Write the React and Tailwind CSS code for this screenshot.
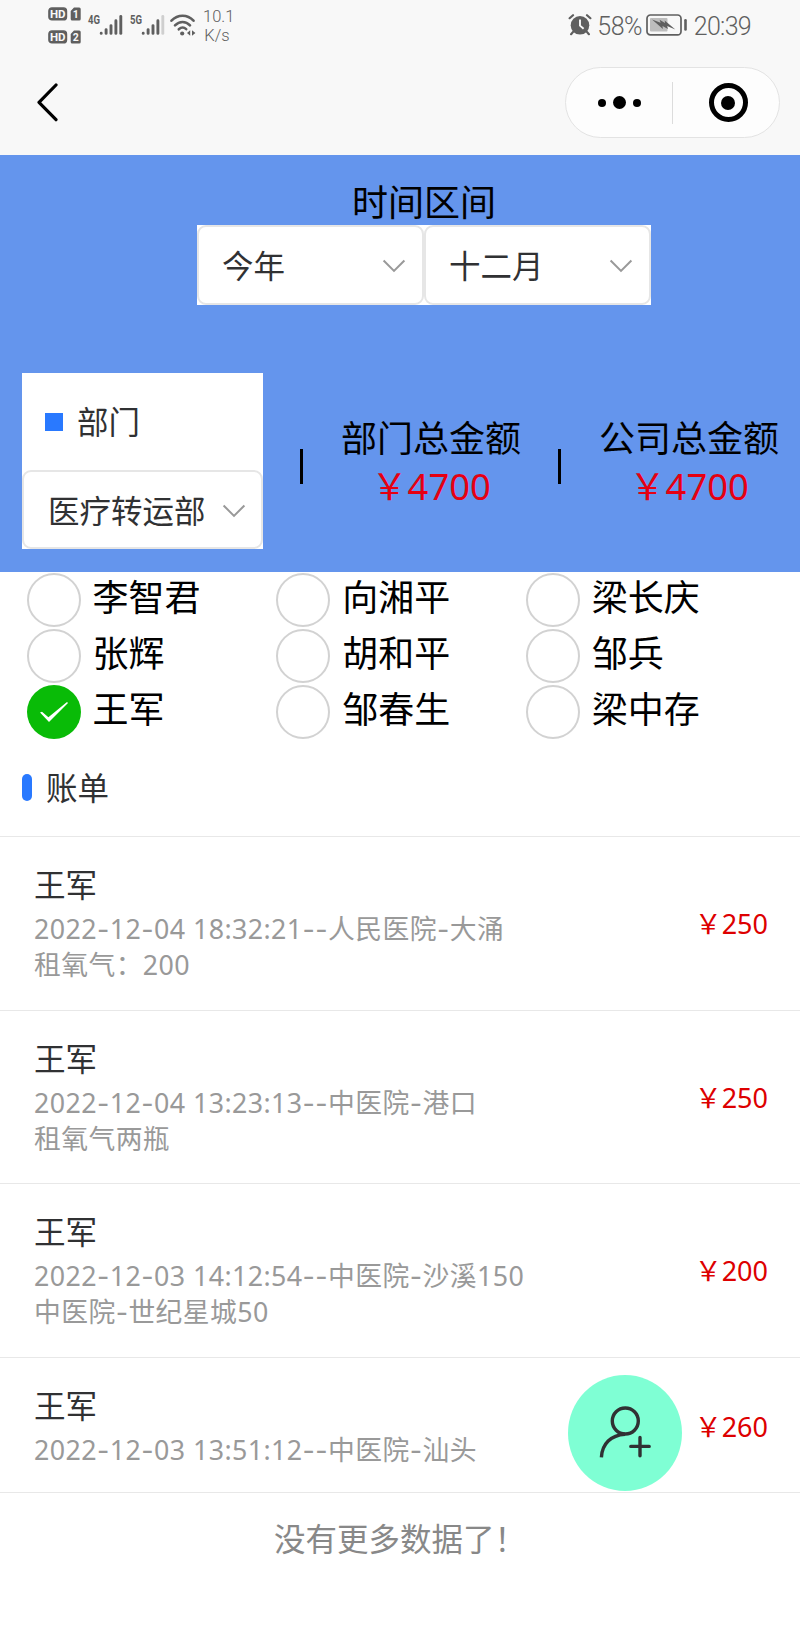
import React, { useState } from 'react';

const STAFF = ['李智君', '向湘平', '梁长庆', '张辉', '胡和平', '邹兵', '王军', '邹春生', '梁中存'];

// Full-width forms, kept as escapes so editors don't fold them to ASCII
const YEN = '\uFFE5';
const COLON = '\uFF1A';
const BANG = '\uFF01';

const BILLS = [
  { id: 1, name: '王军', lines: ['2022-12-04 18:32:21--人民医院-大涌', `租氧气${COLON}200`], amount: 250 },
  { id: 2, name: '王军', lines: ['2022-12-04 13:23:13--中医院-港口', '租氧气两瓶'], amount: 250 },
  { id: 3, name: '王军', lines: ['2022-12-03 14:12:54--中医院-沙溪150', '中医院-世纪星城50'], amount: 200 },
  { id: 4, name: '王军', lines: ['2022-12-03 13:51:12--中医院-汕头'], amount: 260 },
];

// Noto's hyphen is too short next to its digits, so dashes get their own face
function Dashed({ text }) {
  return text.split(/(-+)/).map((part, i) =>
    part.startsWith('-')
      ? <span key={i} className="font-['Inter']">{part}</span>
      : <React.Fragment key={i}>{part}</React.Fragment>
  );
}

function HdBadge({ slot }) {
  return (
    <svg width="33" height="14" viewBox="0 0 33 14" className="block">
      <rect x="0.9" y="0.9" width="17.6" height="12" rx="3" fill="#5f5f5f" stroke="#5f5f5f" strokeWidth="1.4" />
      <text x="9.7" y="11.1" textAnchor="middle" fontFamily="Roboto" fontWeight="700" fontSize="11.5" fill="#f8f8f8">HD</text>
      <path d="M26 0.4h5.2a1.5 1.5 0 0 1 1.5 1.5v10a1.5 1.5 0 0 1-1.5 1.5h-7a1.5 1.5 0 0 1-1.5-1.5v-8z" fill="#5f5f5f" />
      <text x="27.8" y="11.1" textAnchor="middle" fontFamily="Roboto" fontWeight="700" fontSize="10.5" fill="#f8f8f8">{slot}</text>
    </svg>
  );
}

function Signal({ label, weak }) {
  return (
    <svg width="38" height="28" viewBox="-2 -3 38 28" className="block">
      <text x="0" y="9.6" fontFamily="Roboto" fontWeight="700" fontSize="12.5" textLength="12" lengthAdjust="spacingAndGlyphs" fill="#5f5f5f">{label}</text>
      <g stroke="#5f5f5f" strokeWidth="2.9" strokeLinecap="round">
        <path d="M13.2 19.2v.2M18.1 15.6v3.8M23 11.6v7.8M27.9 6.8v12.6" />
        <path d="M32.8 2.5v16.9" stroke={weak ? '#cfcfcf' : '#5f5f5f'} />
      </g>
    </svg>
  );
}

function WifiIcon() {
  return (
    <svg width="26" height="23" viewBox="0 0 26 23" className="block">
      <g fill="none" stroke="#5f5f5f" strokeWidth="2.6" strokeLinecap="round">
        <path d="M1.5 6.7c6.4-6.6 15.8-6.6 22 0" />
        <path d="M5 11.4c4.4-4.6 10.8-4.6 15 0" />
        <path d="M8.8 15.3c2.4-2.2 5.2-2.2 7.4-.2" />
      </g>
      <circle cx="12.2" cy="19.5" r="2.1" fill="#5f5f5f" />
      <path d="M20.2 16.2v5.6l-3.2-2.8zM22 16.2v5.6l3.4-2.8z" fill="#5f5f5f" />
    </svg>
  );
}

function AlarmIcon() {
  return (
    <svg width="24" height="22" viewBox="0 0 24 22" className="block">
      <circle cx="12" cy="11.3" r="9.3" fill="#5f5f5f" />
      <path d="M1.6 4.2L5 1.2M22.4 4.2L19 1.2M5.3 17.6l-2.2 2.6M18.7 17.6l2.2 2.6" stroke="#5f5f5f" strokeWidth="2.2" strokeLinecap="round" />
      <path d="M12 5.6v6l3.6 3.2" fill="none" stroke="#f8f8f8" strokeWidth="1.9" />
    </svg>
  );
}

function BatteryIcon() {
  return (
    <svg width="42" height="22" viewBox="0 0 42 22" className="block">
      <rect x="1" y="1" width="34" height="19.8" rx="3.4" fill="none" stroke="#5f5f5f" strokeWidth="1.7" />
      <rect x="4" y="4" width="17.5" height="13.6" rx="1" fill="#bdbdbd" />
      <path d="M6 5.6l8.6 3.2-1-3 5.4 3.2-.3-2.6 10.6 9-8.2-3.4.8 3-5.4-3 .4 3z" fill="#5f5f5f" />
      <path d="M39.5 6.2v9.2" stroke="#5f5f5f" strokeWidth="2.6" strokeLinecap="round" />
    </svg>
  );
}

function Chevron() {
  return (
    <svg width="24" height="14" viewBox="0 0 24 14" className="block shrink-0">
      <path d="M1.6 1.5L12 11.9 22.4 1.5" fill="none" stroke="#999999" strokeWidth="2" />
    </svg>
  );
}

function SelectBox({ value, className }) {
  return (
    <button
      type="button"
      className={`flex items-center justify-between bg-white border-2 border-[#e6e6e6] rounded-[9px] text-[31.5px] text-[#303133] ${className}`}
    >
      <span className="leading-none pt-0.5">{value}</span>
      <span className="pt-0.5"><Chevron /></span>
    </button>
  );
}

function Total({ label, value }) {
  return (
    <div className="w-[180px] flex flex-col items-center whitespace-nowrap">
      <span className="text-[36px] leading-[48px]">{label}</span>
      <span className="text-[36.4px] leading-[46px] text-[#e60012]">{YEN}{value}</span>
    </div>
  );
}

export default function App() {
  const [selected, setSelected] = useState('王军');

  return (
    <div className="relative w-[800px] h-[1633px] overflow-hidden bg-white text-black font-['Noto_Sans','Noto_Sans_CJK_SC',sans-serif]">

      {/* System status bar + mini program nav */}
      <header className="h-[155px] bg-[#f8f8f8]">
        <div className="h-[50px] pl-12 pr-[49px] flex items-center justify-between text-[#5f5f5f]">
          <div className="flex items-center">
            <div className="flex flex-col gap-[9px]">
              <HdBadge slot="1" />
              <HdBadge slot="2" />
            </div>
            <div className="ml-[5px] flex gap-1">
              <Signal label="4G" />
              <Signal label="5G" weak />
            </div>
            <div className="ml-1"><WifiIcon /></div>
            <div className="ml-[7px] mt-px w-7 font-['Roboto'] font-light text-[16.5px] leading-[19px] text-center">
              <div>10.1</div>
              <div>K/s</div>
            </div>
          </div>
          <div className="flex items-center font-['Roboto'] font-light text-[25px] leading-none">
            <AlarmIcon />
            <span className="ml-[5px] mt-0.5 tracking-[-0.6px]">58%</span>
            <span className="ml-1"><BatteryIcon /></span>
            <span className="ml-1.5 mt-0.5 tracking-[-0.7px]">20:39</span>
          </div>
        </div>

        <div className="h-[105px] pl-9 pr-5 flex items-center justify-between">
          <svg width="24" height="40" viewBox="0 0 24 40" className="block">
            <path d="M20 2L3 19.3 20 36.7" fill="none" stroke="#000" strokeWidth="3.2" strokeLinecap="round" strokeLinejoin="round" />
          </svg>
          <div className="w-[215px] h-[71px] rounded-full border border-[#e3e3e3] bg-[#fdfdfd] flex items-center">
            <div className="w-[106px] flex justify-center items-center gap-[7px]">
              <span className="w-2 h-2 rounded-full bg-black" />
              <span className="w-[13px] h-[13px] rounded-full bg-black" />
              <span className="w-2 h-2 rounded-full bg-black" />
            </div>
            <span className="w-px h-[42px] bg-[#dcdcdc]" />
            <div className="flex-1 flex justify-center pl-1">
              <span className="w-[39px] h-[39px] rounded-full border-5 border-black flex items-center justify-center">
                <span className="w-3.5 h-3.5 rounded-full bg-black" />
              </span>
            </div>
          </div>
        </div>
      </header>

      {/* Filters and totals */}
      <section className="h-[417px] bg-[#6495ed] pt-[22px]">
        <div className="ml-[197px] w-[454px]">
          <h1 className="text-[36px] leading-[52px] h-12 text-center">时间区间</h1>
          <div className="flex bg-white h-[80px]">
            <SelectBox value="今年" className="w-[227px] pl-[23px] pr-4" />
            <SelectBox value="十二月" className="w-[227px] pl-[23px] pr-4" />
          </div>
        </div>

        <div className="mt-[68px] pl-[22px] flex items-start">
          <div className="w-[241px] h-44 bg-white flex flex-col">
            <div className="h-[97px] pl-[23px] flex items-center gap-3.5 text-[31.5px] text-[#303133]">
              <span className="w-[18px] h-[18px] bg-[#2979ff]" />
              <span className="leading-none">部门</span>
            </div>
            <SelectBox value="医疗转运部" className="h-[79px] pl-6 pr-[15px]" />
          </div>
          <span className="ml-[37px] mt-[76px] w-[3px] h-[35px] bg-black" />
          <div className="ml-[38px] mt-[42px]"><Total label="部门总金额" value={4700} /></div>
          <span className="ml-[37px] mt-[76px] w-[3px] h-[35px] bg-black" />
          <div className="ml-[38px] mt-[42px]"><Total label="公司总金额" value={4700} /></div>
        </div>
      </section>

      {/* Staff radio grid */}
      <div className="ml-[26.5px] w-[749px] grid grid-cols-3 auto-rows-[55.8px] pt-px">
        {STAFF.map(name => {
          const isOn = name === selected;
          return (
            <label key={name} className="flex items-start cursor-pointer" onClick={() => setSelected(name)}>
              {isOn ? (
                <span className="w-[54px] h-[54px] rounded-full bg-[#09bb07] flex items-center justify-center">
                  <svg width="30" height="22" viewBox="0 0 30 22" className="block">
                    <path d="M1 11.6l2-.8 6.4 5.4L28 1l1 1L10 21z" fill="#fff" />
                  </svg>
                </span>
              ) : (
                <span className="w-[54px] h-[54px] rounded-full bg-white border-2 border-[#d2d2d2]" />
              )}
              <span className="ml-3 text-[36px] leading-[49px]">{name}</span>
            </label>
          );
        })}
      </div>

      {/* Bill list */}
      <div className="h-[97px] pl-[22px] pb-0.5 flex items-center gap-3.5 text-[31.5px] text-[#303133] border-b border-[#e8e8e8]">
        <span className="w-2.5 h-[27px] rounded-full bg-[#2979ff]" />
        <span className="leading-none">账单</span>
      </div>

      <ul>
        {BILLS.map(bill => (
          <li key={bill.id} className="pl-[34px] pr-8 pt-[26px] pb-[26.4px] last:pb-6 flex items-center justify-between border-b border-[#e8e8e8]">
            <div>
              <div className="mb-1 text-[31.6px] leading-[44px] text-[#303133]">{bill.name}</div>
              {bill.lines.map(line => (
                <div key={line} className="text-[26.8px] tracking-[0.42px] leading-9 text-[#999999] whitespace-nowrap">
                  <Dashed text={line} />
                </div>
              ))}
            </div>
            <span className="pt-0.5 text-[27px] leading-9 text-[#dd0000]">{YEN}{bill.amount}</span>
          </li>
        ))}
      </ul>

      <p className="mt-[23px] text-[31.5px] leading-[46px] text-[#888888] text-center">没有更多数据了{BANG}</p>

      {/* Floating add-member button */}
      <button type="button" className="absolute left-[568px] top-[1375px] w-[114px] h-[116px] rounded-[50%] bg-[#7fffd4] cursor-pointer">
        <svg width="114" height="116" viewBox="0 0 114 116" className="block" fill="none" stroke="#303133" strokeWidth="3.4">
          <circle cx="57.3" cy="46" r="13" />
          <path d="M57 59.2C43 60 34 69 33.4 82.4" />
          <path d="M62.8 71.4h18.4M72 62.4v18.4" strokeLinecap="round" />
        </svg>
      </button>

    </div>
  );
}
